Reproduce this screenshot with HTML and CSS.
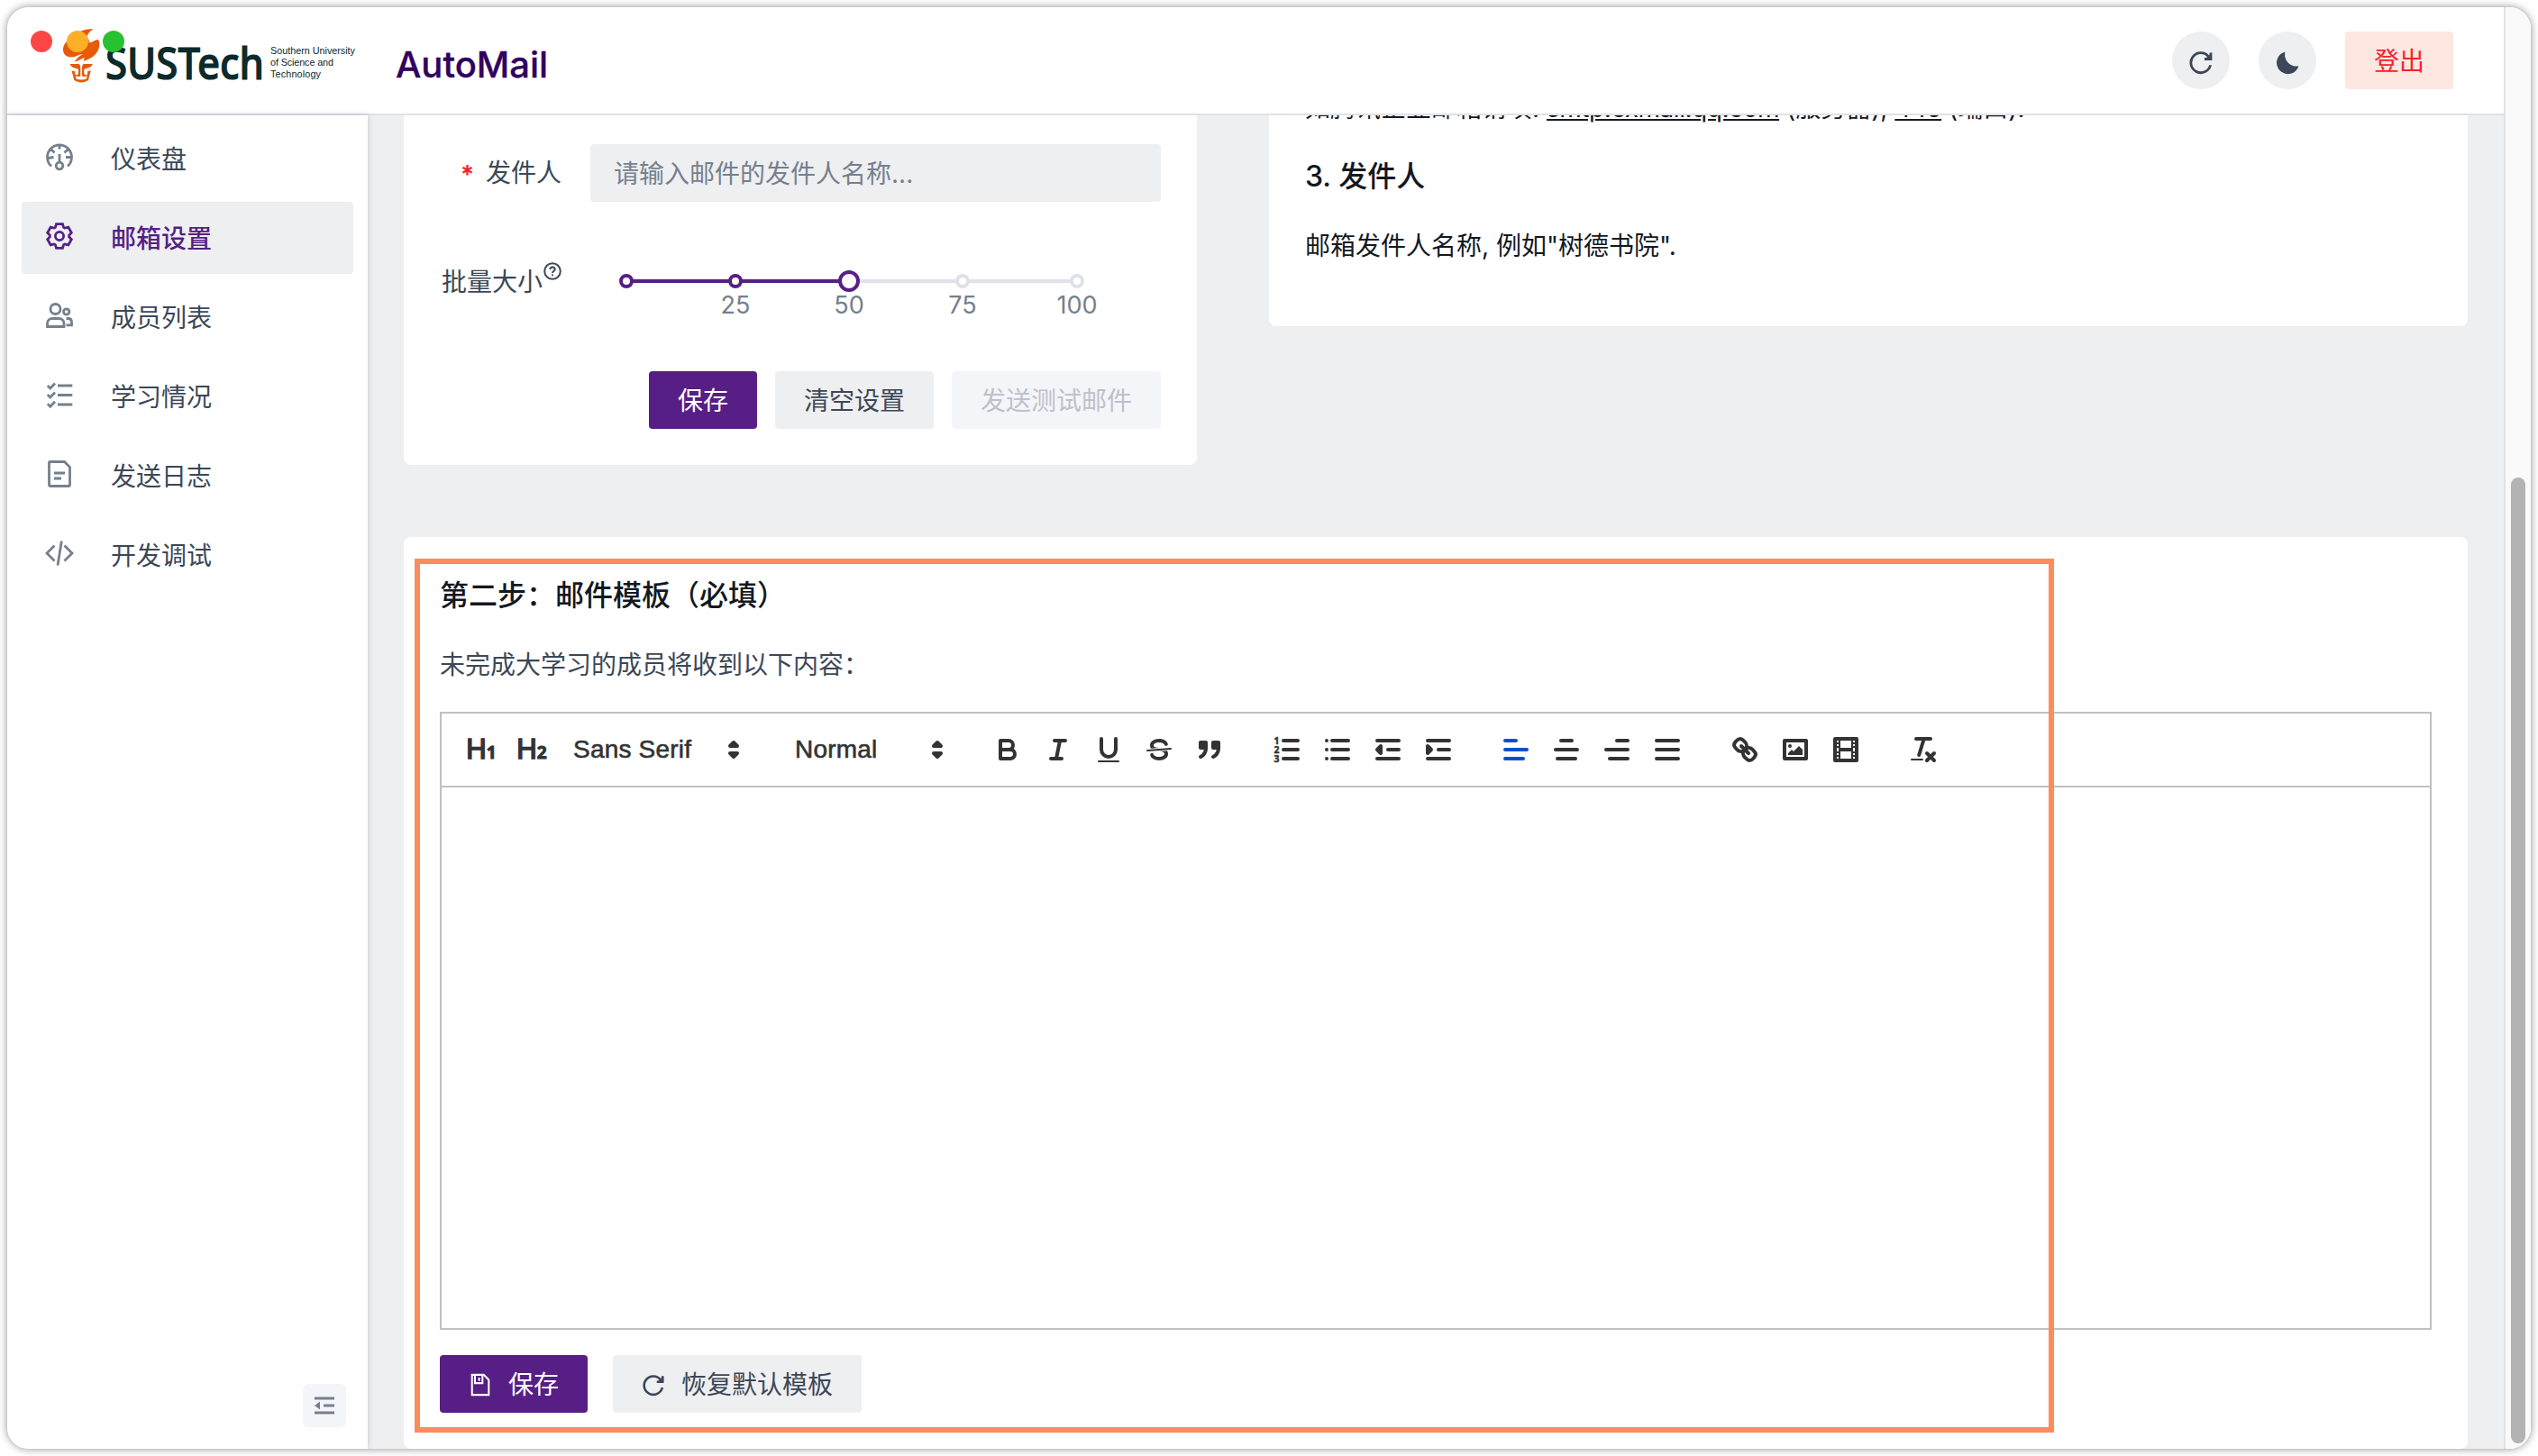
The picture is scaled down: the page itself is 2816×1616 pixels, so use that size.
FILE: index.html
```html
<!DOCTYPE html>
<html lang="zh-CN">
<head>
<meta charset="utf-8">
<title>AutoMail</title>
<link rel="stylesheet" href="styles.css">
</head>
<body>
<div class="window">
  <div class="app">
    <header class="header">
      <svg class="logo" viewBox="66 28 340 68" width="340" height="68">
        <path fill="#e65a0a" d="M103.5 32C95 32.5 88 34 82 39C75 44 70 49 70 55C70 60 73 63 79 63.5C84 63.5 88 60 92 60C88 62 85 65 82.500 68.500C87 68 90 65 94 64L92.500 67.500C100 66.500 108 60 109.500 54C111 50 110.500 45 108.500 44C105 44 102 48 98.500 47C100 44 97 43 96.500 41C97 37 101 34 103.500 32Z"/>
        <path fill="#e65a0a" d="M77.500 71H87.500C89 71.500 89.300 74 89.300 76V84.500C87 85.500 84 85 83 83C85 83.500 87 83 87 81V77C84 75 79 76 77.500 71ZM102.800 71H92.800C91.300 71.500 91 74 91 76V84.500C93.300 85.500 96.300 85 97.300 83C95.300 83.500 93.300 83 93.300 81V77C96.300 75 101.300 76 102.800 71Z"/>
        <path fill="#e65a0a" d="M79.500 78.500L83 79L84.500 87.500C88 88.800 92.500 88.800 96 87.500L97.300 79L100.800 78.500L98 89C93 92.300 87.500 92.300 82.300 89Z"/>
        <text class="logo-name" x="117" y="87.500" textLength="176" lengthAdjust="spacingAndGlyphs">SUSTech</text>
        <text class="logo-sub" x="300" y="59.500" textLength="94">Southern University</text>
        <text class="logo-sub" x="300" y="72.800" textLength="70">of Science and</text>
        <text class="logo-sub" x="300" y="86" textLength="56">Technology</text>
      </svg>
      <h1 class="brand">AutoMail</h1>
      <div class="actions">
        <button class="round"><svg class="ic28" viewBox="0 0 28 28"><path class="s" d="M24.600 17.200A11 11 0 1 1 22.300 7.600"/><path class="s" d="M25 3.500V10.500H18"/><path class="f" d="M26 3.500V10.500H18.500Z"/></svg></button>
        <button class="round"><svg class="ic28" viewBox="0 0 28 28"><path class="f" d="M11.500 2.500A12.500 12.500 0 1 0 26.500 18.200A12.800 12.800 0 0 1 11.500 2.500Z"/></svg></button>
        <button class="btn logout">登出</button>
      </div>
    </header>
    <div class="body">
      <aside class="sidebar">
        <nav class="menu">
          <a class="item"><svg viewBox="0 0 30 30"><path class="s" d="M6 25.500A13.500 13.500 0 1 1 24 25.500M15 1.500V6.500M5.500 6.500L9.500 10.500M24.500 6.500L20.500 10.500M2 16.500L8.500 15.500M28.500 15.500H22M15 12V21"/><circle class="s" cx="15" cy="25" r="3.800"/></svg><span>仪表盘</span></a>
          <a class="item active"><svg viewBox="0 0 30 30"><path class="s" d="M11.500 1.600H18.500L19.600 5.300L21 6.100L24.800 5.200L28.300 11.300L25.700 14.100V15.900L28.300 18.700L24.800 24.800L21 23.900L19.600 24.700L18.500 28.400H11.500L10.400 24.700L9 23.900L5.200 24.800L1.700 18.700L4.300 15.900V14.100L1.700 11.300L5.200 5.200L9 6.100L10.400 5.300Z"/><circle class="s" cx="15" cy="15" r="4.600"/></svg><span>邮箱设置</span></a>
          <a class="item"><svg viewBox="0 0 30 30"><circle class="s" cx="10.500" cy="8" r="5.500"/><circle class="s" cx="22.700" cy="11" r="3.200"/><path class="s" d="M1.500 27.500V24C1.500 20.500 4 18.500 7 18.500H14C17.500 18.500 20 20.500 20 24V27.500ZM22.500 18.500H24.500C27 18.500 28.500 20 28.500 22.500V25.800H22.500"/></svg><span>成员列表</span></a>
          <a class="item"><svg viewBox="0 0 30 30"><path class="s" d="M1.800 5L4.800 8L10 2.500M1.800 15L4.800 18L10 12.500M1.800 25.300L4.800 28.300L10 22.800M13 5H29.300M13 15.500H29.300M13 26H29.300"/></svg><span>学习情况</span></a>
          <a class="item"><svg viewBox="0 0 30 30"><path class="s" d="M4.500 1.500H20.500L26.500 7.500V27.500Q26.500 28.500 25.500 28.500H4.500Q3.500 28.500 3.500 27.500V2.500Q3.500 1.500 4.500 1.500ZM9 14H21M9 20H17"/></svg><span>发送日志</span></a>
          <a class="item"><svg viewBox="0 0 30 30"><path class="s" d="M9.500 6.500L1 15L9.500 23.500M20.500 6.500L29 15L20.500 23.500M17.300 1.500L13 28.500"/></svg><span>开发调试</span></a>
        </nav>
        <button class="collapse"><svg viewBox="0 0 22 20"><path class="s" d="M0 2H22M10 10H22M0 18H22"/><path class="f" d="M6 5.500V14.500L0 10Z"/></svg></button>
      </aside>
      <main class="main">
        <div class="columns">
          <section class="card settings">
            <div class="field">
              <label class="label"><b class="req">*</b>发件人</label>
              <div class="input">请输入邮件的发件人名称...</div>
            </div>
            <div class="field batch">
              <label class="label">批量大小<svg class="help" viewBox="0 0 20 20"><circle cx="10" cy="10" r="8.800"/><path d="M7.300 8C7.300 6.300 8.500 5.400 10 5.400S12.700 6.400 12.700 7.900C12.700 9.700 10 9.800 10 12M10 13.600V15.200"/></svg></label>
              <svg class="slider" viewBox="655 280 633 72" width="633" height="72">
                <path stroke="#e0e1e8" stroke-width="4" d="M942 312H1195"/>
                <path stroke="#571f85" stroke-width="4" d="M695 312H942"/>
                <g fill="#fff" stroke="#571f85" stroke-width="4"><circle cx="695" cy="312" r="6"/><circle cx="816" cy="312" r="6"/><circle cx="942" cy="312" r="10"/></g>
                <g fill="#fff" stroke="#e0e1e8" stroke-width="4"><circle cx="1068" cy="312" r="6"/><circle cx="1195" cy="312" r="6"/></g>
                <g class="marks"><text x="816" y="348">25</text><text x="942" y="348">50</text><text x="1068" y="348">75</text><text x="1195" y="348">100</text></g>
              </svg>
            </div>
            <div class="buttons">
              <button class="btn primary">保存</button>
              <button class="btn">清空设置</button>
              <button class="btn disabled">发送测试邮件</button>
            </div>
          </section>
          <section class="card guide">
            <p class="tip first">如腾讯企业邮箱请填: <u>smtp.exmail.qq.com</u> (服务器), <u>445</u> (端口).</p>
            <h3 class="title">3. 发件人</h3>
            <p class="tip">邮箱发件人名称, 例如"树德书院".</p>
          </section>
        </div>
        <section class="card template">
          <h3 class="title">第二步：邮件模板（必填）</h3>
          <p class="desc">未完成大学习的成员将收到以下内容：</p>
          <div class="editor">
            <div class="toolbar">
              <div class="group">
                <span class="tool head">H<small>1</small></span>
                <span class="tool head">H<small>2</small></span>
                <span class="picker font">Sans Serif<svg viewBox="0 0 18 18"><polygon class="q e" points="7 11 9 13 11 11 7 11"/><polygon class="q e" points="7 7 9 5 11 7 7 7"/></svg></span>
              </div>
              <div class="group">
                <span class="picker size">Normal<svg viewBox="0 0 18 18"><polygon class="q e" points="7 11 9 13 11 11 7 11"/><polygon class="q e" points="7 7 9 5 11 7 7 7"/></svg></span>
              </div>
              <div class="group">
                <span class="tool"><svg viewBox="0 0 18 18"><path class="q" d="M5,4H9.500A2.500,2.500,0,0,1,12,6.500v0A2.500,2.500,0,0,1,9.500,9H5V4Z"/><path class="q" d="M5,9h5.500A2.500,2.500,0,0,1,13,11.500v0A2.500,2.500,0,0,1,10.500,14H5V9Z"/></svg></span>
                <span class="tool"><svg viewBox="0 0 18 18"><path class="q" d="M7 4H13M5 14H11M8 14L10 4"/></svg></span>
                <span class="tool"><svg viewBox="0 0 18 18"><path class="q" d="M5,3V9a4.012,4.012,0,0,0,4,4H9a4.012,4.012,0,0,0,4-4V3"/><rect class="e" height="1" rx=".5" width="12" x="3" y="15"/></svg></span>
                <span class="tool"><svg viewBox="0 0 18 18"><path class="q thin" d="M15.500 8.500L2.500 9.500"/><path class="e" d="M9.007,8C6.542,7.791,6,7.519,6,6.500,6,5.792,7.283,5,9,5c1.571,0,2.765.679,2.969,1.309a1,1,0,0,0,1.900-.617C13.356,4.106,11.354,3,9,3,6.200,3,4,4.538,4,6.500a3.200,3.200,0,0,0,.5,1.843Z"/><path class="e" d="M8.984,10C11.457,10.208,12,10.479,12,11.500c0,0.708-1.283,1.500-3,1.500-1.571,0-2.765-.679-2.969-1.309a1,1,0,1,0-1.900.617C4.644,13.894,6.646,15,9,15c2.800,0,5-1.538,5-3.500a3.200,3.200,0,0,0-.5-1.843Z"/></svg></span>
                <span class="tool"><svg viewBox="0 0 18 18"><rect class="q e" height="3" width="3" x="4" y="5"/><rect class="q e" height="3" width="3" x="11" y="5"/><path class="q e" d="M7,8c0,4.031-3,5-3,5"/><path class="q e" d="M14,8c0,4.031-3,5-3,5"/></svg></span>
              </div>
              <div class="group">
                <span class="tool"><svg viewBox="0 0 18 18"><path class="q" d="M7 4H15M7 9H15M7 14H15"/><g class="digits"><text x="1.800" y="5.800">1</text><text x="1.800" y="10.900">2</text><text x="1.800" y="16">3</text></g></svg></span>
                <span class="tool"><svg viewBox="0 0 18 18"><path class="q" d="M6 4H15M6 9H15M6 14H15M3 4H3M3 9H3M3 14H3"/></svg></span>
                <span class="tool"><svg viewBox="0 0 18 18"><path class="q" d="M3 4H15M3 14H15M9 9H15"/><polyline class="q e" points="5 7 5 11 3 9 5 7"/></svg></span>
                <span class="tool"><svg viewBox="0 0 18 18"><path class="q" d="M3 4H15M3 14H15M9 9H15"/><polyline class="q e" points="3 7 3 11 5 9 3 7"/></svg></span>
              </div>
              <div class="group">
                <span class="tool on"><svg viewBox="0 0 18 18"><path class="q" d="M3 9H15M3 14H13M3 4H9"/></svg></span>
                <span class="tool"><svg viewBox="0 0 18 18"><path class="q" d="M3 9H15M4 14H14M6 4H12"/></svg></span>
                <span class="tool"><svg viewBox="0 0 18 18"><path class="q" d="M3 9H15M5 14H15M9 4H15"/></svg></span>
                <span class="tool"><svg viewBox="0 0 18 18"><path class="q" d="M3 9H15M3 14H15M3 4H15"/></svg></span>
              </div>
              <div class="group">
                <span class="tool"><svg viewBox="0 0 18 18"><path class="q" d="M7 7L11 11"/><path class="q" d="M8.900,4.577a3.476,3.476,0,0,1,.36,4.679A3.476,3.476,0,0,1,4.577,8.900C3.185,7.500,2.035,6.400,4.217,4.217S7.500,3.185,8.900,4.577Z"/><path class="q" d="M13.423,9.100a3.476,3.476,0,0,0-4.679-.36,3.476,3.476,0,0,0,.36,4.679c1.392,1.392,2.500,2.542,4.679.36S14.815,10.500,13.423,9.100Z"/></svg></span>
                <span class="tool"><svg viewBox="0 0 18 18"><rect class="q" height="10" width="12" x="3" y="4"/><circle class="e" cx="6" cy="7" r="1"/><polyline class="e" points="5 12 5 11 7 9 8 10 11 7 13 9 13 12 5 12"/></svg></span>
                <span class="tool"><svg viewBox="0 0 18 18"><rect class="q" height="12" width="12" x="3" y="3"/><path class="e" d="M5 3H6V15H5ZM12 3H13V15H12ZM5 8H13V10H5ZM3 5H6V6H3ZM3 7H6V8H3ZM3 10H6V11H3ZM3 12H6V13H3ZM12 5H15V6H12ZM12 7H15V8H12ZM12 10H15V11H12ZM12 12H15V13H12Z"/></svg></span>
              </div>
              <div class="group">
                <span class="tool"><svg viewBox="0 0 18 18"><path class="q" d="M5 3H13M6.600 12L9.350 3M11 11L15 15M15 11L11 15"/><rect class="e" height="1" rx=".5" width="7" x="2" y="14"/></svg></span>
              </div>
            </div>
            <div class="canvas"></div>
          </div>
          <div class="footer">
            <button class="btn primary icon"><svg class="ic26" viewBox="0 0 28 28"><path class="s w2" d="M4 2H18L24 8V26H4Z"/><path class="s w2" d="M7.500 2V12H16.500V2M12.500 5.500V9.500"/></svg>保存</button>
            <button class="btn icon"><svg class="ic26" viewBox="0 0 28 28"><path class="s" d="M24.600 17.200A11 11 0 1 1 22.300 7.600"/><path class="s" d="M25 3.500V10.500H18"/><path class="f" d="M26 3.500V10.500H18.500Z"/></svg>恢复默认模板</button>
          </div>
        </section>
      </main>
    </div>
  </div>
  <div class="scrollbar"><div class="thumb"></div></div>
  <i class="light red"></i><i class="light yellow"></i><i class="light green"></i>
  <div class="highlight"></div>
</div>
</body>
</html>
```

FILE: styles.css
```css
* { box-sizing: border-box; margin: 0; padding: 0; }
body {
  width: 2816px; height: 1616px; padding: 8px; overflow: hidden;
  background: #fff; color: #3c4757;
  font: 28px/44px Inter, "Noto Sans CJK SC", sans-serif;
}
button { font: inherit; color: inherit; border: 0; }
.s { fill: none; stroke: currentColor; stroke-width: 2.8; }
.w2 { stroke-width: 2.2; }
.f { fill: currentColor; }

.window {
  position: relative; display: flex; width: 2800px; height: 1600px;
  border-radius: 24px; overflow: hidden; background: #fff;
}
body::before {
  content: ""; position: absolute; left: 8px; top: 8px; width: 2800px; height: 1600px;
  border-radius: 24px; box-shadow: 0 0 10px rgba(0, 0, 0, .45);
}
.app { width: 2770px; display: flex; flex-direction: column; }
.scrollbar {
  width: 30px; padding: 522px 4px 6px 6px; background: #fafafa;
  border-left: 2px solid #e2e2e4;
}
.thumb { width: 16px; height: 100%; border-radius: 8px; background: #b3b3b3; }
.light { position: absolute; top: 26px; width: 24px; height: 24px; border-radius: 50%; }
.red { left: 26px; background: #ff4646; }
.yellow { left: 66px; background: #fdaf27; }
.green { left: 106px; background: #28c131; }
.highlight {
  position: absolute; left: 452px; top: 612px; width: 1819px; height: 970px;
  border: 6px solid #fd8c5c;
}

.header {
  display: flex; align-items: flex-start; height: 120px;
  padding: 20px 56px 0 58px; border-bottom: 2px solid #e0e1e8;
}
.logo-name { font: 500 49px "Noto Sans", sans-serif; fill: #0a2a2c; stroke: #0a2a2c; stroke-width: 1.2px; }
.logo-sub { font: 10.8px "Liberation Sans", Arial, sans-serif; fill: #0a2a2c; }
.brand { margin: 20px 0 0 33px; font-size: 40px; line-height: 48px; font-weight: 500; color: #2f0060; -webkit-text-stroke: .3px #2f0060; }
.actions { display: flex; gap: 32px; margin: 7px 0 0 auto; }
.round {
  display: flex; align-items: center; justify-content: center;
  width: 64px; height: 64px; border-radius: 50%; background: #eeeff1; padding-top: 3px;
}
.ic28 { width: 28px; height: 28px; }
.ic26 { width: 26px; height: 26px; }
.btn { height: 64px; padding: 1px 32px 0; border-radius: 4px; background: #eeeff1; white-space: nowrap; }
.logout { background: #fee6e1; color: #f5222d; }
.primary { background: #571f85; color: #fff; }
.disabled { background: #f4f5f9; color: #bcc1ca; }

.body { flex: 1; display: flex; min-height: 0; }
.sidebar {
  display: flex; flex-direction: column; justify-content: space-between;
  width: 400px; padding: 8px 16px 24px; background: #fff; z-index: 1;
  box-shadow: 0 0 6px rgba(90, 90, 130, .3);
}
.menu { display: flex; flex-direction: column; gap: 8px; }
.item { display: flex; align-items: center; height: 80px; padding-left: 27px; border-radius: 4px; }
.item svg { width: 30px; height: 30px; margin: -4px 42px 0 0; color: #75808e; overflow: visible; }
.item span { padding-top: 2px; }
.active { background: #eeeff1; color: #571f85; font-weight: 500; }
.active svg { color: #571f85; }
.collapse {
  align-self: flex-end; display: flex; align-items: center; justify-content: center;
  width: 48px; height: 48px; margin-right: 8px; border-radius: 6px; background: #f4f5f9; color: #75808e;
}
.collapse svg { width: 22px; height: 20px; }

.main { flex: 1; display: flex; flex-direction: column; gap: 80px; padding: 0 40px; background: #eeeff1; }
.columns { display: flex; align-items: flex-start; gap: 80px; }
.card { background: #fff; border-radius: 0 0 8px 8px; overflow: hidden; }
.settings { width: 880px; height: 388px; padding: 32px 40px 40px; }
.field { display: flex; align-items: center; gap: 32px; height: 64px; }
.label { width: 135px; display: flex; justify-content: flex-end; padding-top: 1px; white-space: nowrap; }
.req { margin-right: 13px; font-weight: 600; color: #f5222d; padding-top: 2px; }
.input { flex: 1; height: 64px; padding-left: 26px; line-height: 66px; border-radius: 4px; background: #eeeff1; color: #75808e; }
.batch { margin-top: 56px; align-items: flex-start; }
.batch .label { line-height: 64px; }
.help { width: 20px; height: 20px; margin: 10px 0 0 1px; fill: none; stroke: #3c4757; stroke-width: 2; flex: none; }
.slider { flex: none; overflow: visible; fill: none; }
.marks { fill: #75808e; text-anchor: middle; font-size: 27px; }
.buttons { display: flex; justify-content: flex-end; gap: 20px; margin-top: 68px; }
.guide { flex: 1; height: 234px; padding-left: 40px; color: #14181f; }
.tip.first { margin: -30px 0 30px; }
.tip.first u { letter-spacing: -.45px; }
.tip { margin-top: 31px; }
.title { font-size: 32px; line-height: 48px; font-weight: 500; color: #14181f; }

.template { flex: 1; padding: 41px 40px 40px; border-radius: 8px; }
.desc { margin: 31px 0 30px; }
.editor { height: 686px; border: 2px solid #c1c1c1; }
.toolbar {
  display: flex; height: 82px; padding: 16px; gap: 30px; border-bottom: 2px solid #c1c1c1;
  color: #333; font: 28px/48px "Liberation Sans", Arial, sans-serif;
}
.group { display: flex; }
.tool { width: 56px; height: 48px; padding: 6px 10px; }
.tool svg { display: block; width: 36px; height: 36px; }
.q { fill: none; stroke: currentColor; stroke-width: 2; stroke-linecap: round; stroke-linejoin: round; }
.thin { stroke-width: 1; }
.e { fill: currentColor; }
.on { color: #0650c8; }
.head { padding: 0; font-size: 31px; -webkit-text-stroke: 1.6px #333; text-align: center; white-space: nowrap; }
.head small { font: 700 19px "Noto Sans", sans-serif; -webkit-text-stroke: 1px #333; }
.digits { font: 700 5.200px "Noto Sans", sans-serif; fill: #333; stroke: #333; stroke-width: .25px; }
.picker { display: flex; justify-content: space-between; align-items: center; padding: 0 2px 0 18px; letter-spacing: .2px; -webkit-text-stroke: .6px #333; }
.picker svg { width: 36px; height: 36px; }
.font { width: 216px; }
.size { width: 196px; }
.footer { display: flex; gap: 28px; margin-top: 28px; }
.icon { display: flex; align-items: center; gap: 18px; }
```
